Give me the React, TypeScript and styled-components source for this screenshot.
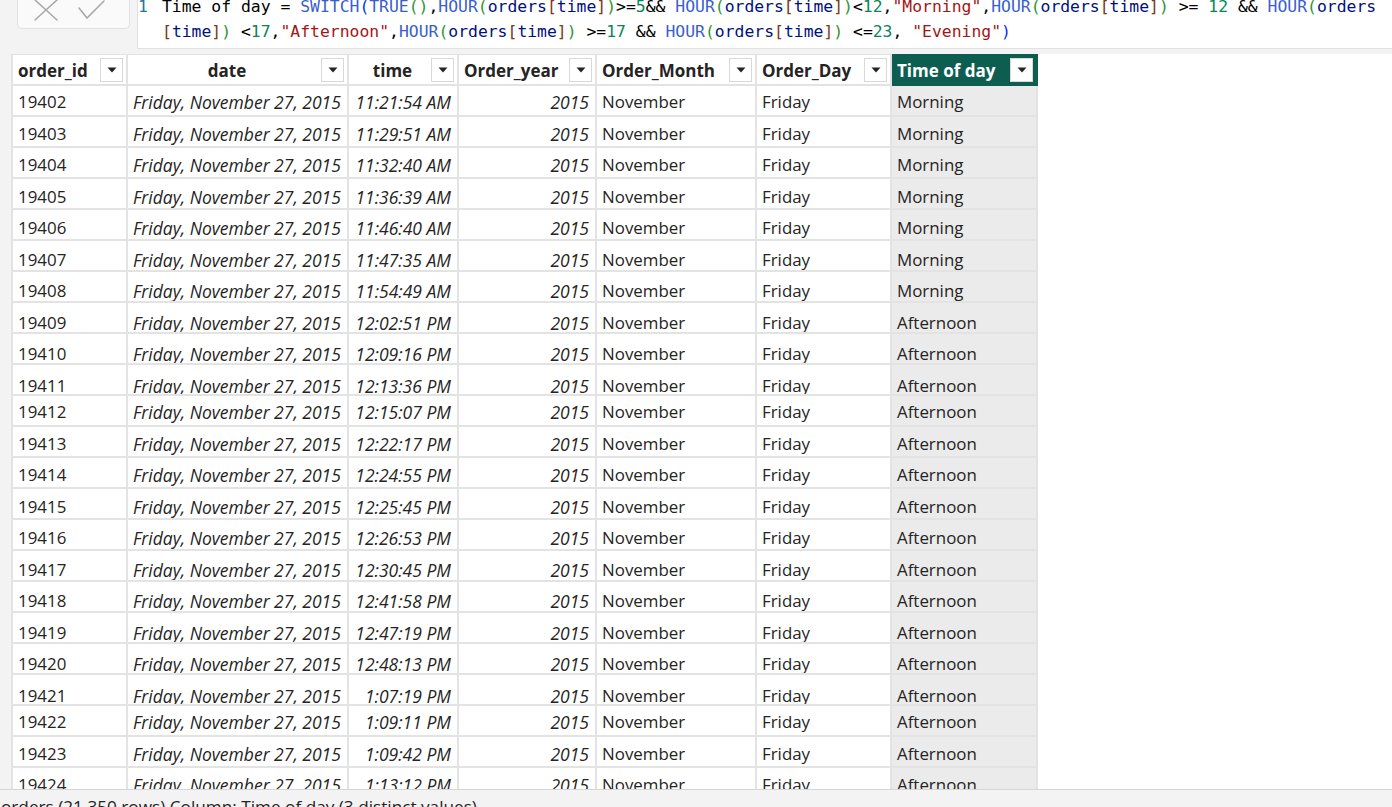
import React from 'react';
import styled, { createGlobalStyle } from 'styled-components';

const GlobalStyle = createGlobalStyle`
  html, body {
    margin: 0;
    padding: 0;
    background: #ffffff;
  }
  body {
    font-family: 'Open Sans', 'Noto Sans', sans-serif;
    color: #252423;
  }
`;

const Page = styled.div`
  width: 1392px;
  height: 807px;
  display: flex;
  flex-direction: column;
  overflow: hidden;
  background: #ffffff;
`;

const TopArea = styled.div`
  height: 54px;
  flex-shrink: 0;
  display: flex;
  align-items: flex-start;
  background: #f3f3f3;
`;

const CommitBox = styled.div`
  width: 113px;
  height: 29px;
  margin-left: 17px;
  flex-shrink: 0;
  box-sizing: border-box;
  background: #fafafa;
  border: 1px solid #e1e1e1;
  border-top: none;
  border-radius: 0 0 5px 5px;
`;

const FormulaBox = styled.div`
  flex: 1;
  height: 49px;
  margin-left: 7px;
  box-sizing: border-box;
  background: #ffffff;
  border-left: 1px solid #e1e1e1;
  border-bottom: 1px solid #e1e1e1;
  overflow: hidden;
  display: flex;
`;

const Gutter = styled.div`
  width: 24px;
  flex-shrink: 0;
  margin-top: -6px;
  font-family: 'DejaVu Sans Mono', monospace;
  font-size: 16.4px;
  line-height: 25px;
  color: #237893;
`;

const Code = styled.div`
  margin-top: -6px;
  font-family: 'DejaVu Sans Mono', monospace;
  font-size: 16.4px;
  line-height: 25px;
  white-space: pre;
  color: #000000;
`;

const Tok = styled.span<{ $c: string }>`
  color: ${p => p.$c};
`;

const TableArea = styled.div`
  flex: 1;
  display: flex;
  overflow: hidden;
  min-height: 0;
`;

const SideStrip = styled.div`
  width: 11px;
  flex-shrink: 0;
  background: #f3f3f3;
`;

const Grid = styled.div`
  display: flex;
  flex-direction: column;
  border-left: 2px solid #e3e3e3;
`;

const COLS = '115px 221px 110px 138px 160px 135px 146px';

const HeadRow = styled.div`
  display: grid;
  grid-template-columns: ${COLS};
  height: 32px;
  flex-shrink: 0;
`;

const HeadCell = styled.div<{ $selected?: boolean }>`
  display: flex;
  align-items: center;
  box-sizing: border-box;
  height: 32px;
  padding: 1px 3px 0 5px;
  border-top: 1px solid #e3e3e3;
  border-right: 2px solid #e3e3e3;
  border-bottom: 2px solid #e3e3e3;
  background: ${p => (p.$selected ? '#0d5e50' : '#ffffff')};
  border-color: ${p => (p.$selected ? '#0d5e50' : '#e3e3e3')};
  color: ${p => (p.$selected ? '#ffffff' : '#252423')};
  font-size: 17px;
  font-weight: 700;
`;

const HeadLabel = styled.span<{ $center?: boolean }>`
  flex: 1;
  text-align: ${p => (p.$center ? 'center' : 'left')};
  white-space: nowrap;
  overflow: hidden;
`;

const DropButton = styled.span`
  width: 23px;
  height: 24px;
  flex-shrink: 0;
  box-sizing: border-box;
  display: flex;
  align-items: center;
  justify-content: center;
  background: #ffffff;
  border: 1px solid #d9d9d9;
`;

const Row = styled.div`
  display: grid;
  grid-template-columns: ${COLS};
  height: 31px;
  flex-shrink: 0;
`;

const Cell = styled.div<{ $shift: number; $italic?: boolean; $right?: boolean; $selected?: boolean }>`
  box-sizing: border-box;
  height: 31px;
  overflow: hidden;
  padding: ${p => p.$shift}px ${p => (p.$right ? 6 : 5)}px 0 5px;
  border-right: 2px solid #e3e3e3;
  border-bottom: 2px solid #e3e3e3;
  background: ${p => (p.$selected ? '#ebebeb' : '#ffffff')};
  font-size: ${p => (p.$italic ? '17.5px' : '16.9px')};
  line-height: 22px;
  font-style: ${p => (p.$italic ? 'italic' : 'normal')};
  text-align: ${p => (p.$right ? 'right' : 'left')};
  white-space: nowrap;
`;

const StatusBar = styled.div`
  height: 18px;
  flex-shrink: 0;
  box-sizing: border-box;
  padding: 6px 0 0 1px;
  background: #f3f3f3;
  border-top: 1px solid #d6d6d6;
  font-size: 17.2px;
  line-height: 22px;
  color: #252423;
  white-space: nowrap;
  overflow: hidden;
`;

const BRACKETS = ['#0431fa', '#319331', '#7b3814'];

const FORMULA = [
  'Time of day = SWITCH(TRUE(),HOUR(orders[time])>=5&& HOUR(orders[time])<12,"Morning",HOUR(orders[time]) >= 12 && HOUR(orders',
  '[time]) <17,"Afternoon",HOUR(orders[time]) >=17 && HOUR(orders[time]) <=23, "Evening")',
];

// tiny DAX highlighter, bracket colours follow nesting depth
function highlight(lines: string[]) {
  let depth = 0;
  return lines.map(line => {
    const toks: { t: string; c: string }[] = [];
    const re = /("[^"]*")|(SWITCH|TRUE|HOUR)|(orders|time)|(\d+)|([()[\]])|([^"()[\]\d]+?(?=SWITCH|TRUE|HOUR|orders|time|[()[\]"\d]|$))/g;
    let m: RegExpExecArray | null;
    while ((m = re.exec(line)) !== null) {
      if (m[0] === '') {
        re.lastIndex++;
        continue;
      }
      if (m[1]) toks.push({ t: m[1], c: '#a31515' });
      else if (m[2]) toks.push({ t: m[2], c: '#3a5fcd' });
      else if (m[3]) toks.push({ t: m[3], c: '#001080' });
      else if (m[4]) toks.push({ t: m[4], c: '#098658' });
      else if (m[5]) {
        if (m[5] === '(' || m[5] === '[') {
          toks.push({ t: m[5], c: BRACKETS[depth % 3] });
          depth++;
        } else {
          depth--;
          toks.push({ t: m[5], c: BRACKETS[depth % 3] });
        }
      } else toks.push({ t: m[0], c: '#000000' });
    }
    return toks;
  });
}

const TIMES = [
  '11:21:54 AM', '11:29:51 AM', '11:32:40 AM', '11:36:39 AM', '11:46:40 AM', '11:47:35 AM',
  '11:54:49 AM', '12:02:51 PM', '12:09:16 PM', '12:13:36 PM', '12:15:07 PM', '12:22:17 PM',
  '12:24:55 PM', '12:25:45 PM', '12:26:53 PM', '12:30:45 PM', '12:41:58 PM', '12:47:19 PM',
  '12:48:13 PM', '1:07:19 PM', '1:09:11 PM', '1:09:42 PM', '1:13:12 PM',
];

const rows = TIMES.map((time, i) => ({
  id: 19402 + i,
  time,
  part: time.endsWith('AM') ? 'Morning' : 'Afternoon',
}));

const HEADERS = [
  { label: 'order_id' },
  { label: 'date', center: true },
  { label: 'time', center: true },
  { label: 'Order_year' },
  { label: 'Order_Month' },
  { label: 'Order_Day' },
  { label: 'Time of day', selected: true },
];

const Caret = () => (
  <svg width="10" height="6" viewBox="0 0 10 6">
    <path d="M0.5 0.5 L9.5 0.5 L5 5.5 Z" fill="#252423" />
  </svg>
);

const CommitIcons = () => (
  <svg width="113" height="29" viewBox="0 0 113 29">
    <g stroke="#a9a9a9" strokeWidth="1.6" fill="none" strokeLinecap="round">
      <path d="M17 0 L39 20 M39 0 L17 20" />
      <path d="M61 8 L69 18 L86 1" />
    </g>
  </svg>
);

const App: React.FC = () => {
  const code = highlight(FORMULA);
  return (
    <Page>
      <GlobalStyle />
      <TopArea>
        <CommitBox>
          <CommitIcons />
        </CommitBox>
        <FormulaBox>
          <Gutter>1</Gutter>
          <Code>
            {code.map((line, li) => (
              <div key={li}>
                {line.map((tk, ti) => (
                  <Tok key={ti} $c={tk.c}>
                    {tk.t}
                  </Tok>
                ))}
              </div>
            ))}
          </Code>
        </FormulaBox>
      </TopArea>
      <TableArea>
        <SideStrip />
        <Grid>
          <HeadRow>
            {HEADERS.map(h => (
              <HeadCell key={h.label} $selected={h.selected}>
                <HeadLabel $center={h.center}>{h.label}</HeadLabel>
                <DropButton>
                  <Caret />
                </DropButton>
              </HeadCell>
            ))}
          </HeadRow>
          {rows.map((r, i) => {
            const shift = 4.5 + Math.ceil((i % 10) / 2);
            return (
              <Row key={r.id}>
                <Cell $shift={shift}>{r.id}</Cell>
                <Cell $shift={shift} $italic>
                  Friday, November 27, 2015
                </Cell>
                <Cell $shift={shift} $italic $right>
                  {r.time}
                </Cell>
                <Cell $shift={shift} $italic $right>
                  2015
                </Cell>
                <Cell $shift={shift}>November</Cell>
                <Cell $shift={shift}>Friday</Cell>
                <Cell $shift={shift} $selected>
                  {r.part}
                </Cell>
              </Row>
            );
          })}
        </Grid>
      </TableArea>
      <StatusBar>orders (21,350 rows) Column: Time of day (3 distinct values)</StatusBar>
    </Page>
  );
};

export default App;
